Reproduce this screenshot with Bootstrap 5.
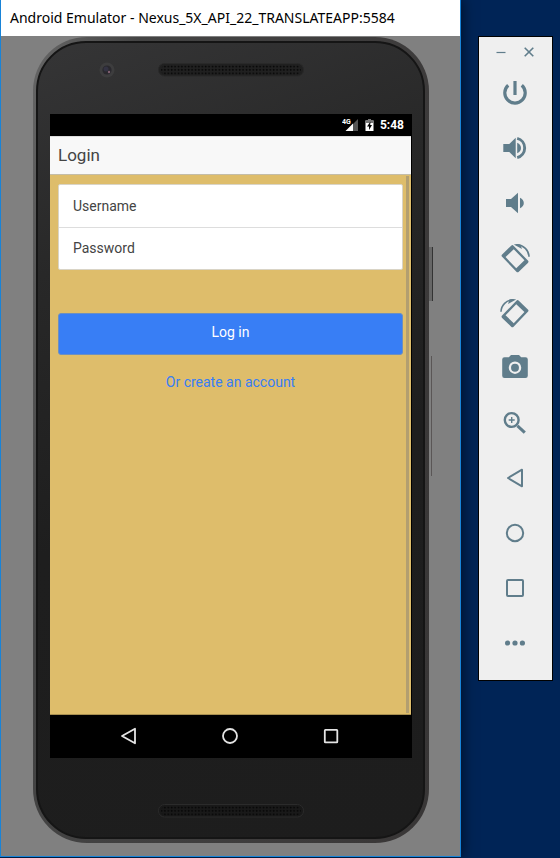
<!DOCTYPE html>
<html lang="en">
<head>
<meta charset="utf-8">
<meta name="viewport" content="width=device-width, initial-scale=1">
<title>Android Emulator</title>
<link href="https://cdn.jsdelivr.net/npm/bootstrap@5.3.0/dist/css/bootstrap.min.css" rel="stylesheet">
<style>
  body { background: #002456; font-family: Roboto, "Liberation Sans", sans-serif; }
  button { background: none; border: 0; padding: 0; color: inherit; }
  svg { display: block; }
  .desktop { padding-right: 7px; padding-bottom: 1px; gap: 17px; }
  .emu-window { background: #808080; border: 1px solid #1883d7; border-top: 0; min-width: 0; box-shadow: 2px 0 12px rgba(0,0,0,.5); }
  .emu-title { background: #fff; color: #000; height: 36px; padding: 0 9px; font: 14px/35px "Noto Sans", sans-serif; white-space: nowrap; overflow: hidden; }
  .device { margin: 1px 31px 13px 32px; padding: 4px 4px 4px 3px; border-radius: 54px; background: linear-gradient(100deg, #666 0, #444 20%, #3c3a3a 80%, #383636 100%); }
  .device-face { border: 2px solid #151515; border-radius: 50px; padding: 0 11px 0 12px; background: linear-gradient(160deg, #353536 0, #282828 25%, #1e1e1e 55%, #1d1d1d 100%); }
  .bezel-top { height: 71px; }
  .bezel-bottom { height: 79px; }
  .grille-top { margin-top: 20px; }
  .grille-bottom { margin-top: 46px; }
  .lens { left: 49px; top: 19px; }
  .side-key { right: -4px; top: 210px; width: 4px; height: 54px; background: #666; border-right: 1px solid #333; }
  .side-rocker { right: -3px; top: 319px; width: 3px; height: 120px; border-right: 1px solid #5a5656; }
  .status-bar { background: #000; color: #fff; height: 22px; padding-right: 8px; font-size: 12px; font-weight: 700; gap: 6px; }
  .app-header { background: #f8f8f8; color: #444; height: 39px; border-top: 1px solid #ddd; border-bottom: 1px solid #c4bda8; padding: 0 8px; margin-right: 1px; }
  .app-header h1 { font-size: 17px; line-height: 37px; font-weight: 400; margin: 0; }
  .app-body { background: #debd6b; padding: 9px 8px 0; border-bottom: 1px solid #a88f50; margin-right: 1px; }
  .scroll-track { right: 2px; top: 1px; bottom: 1px; width: 3px; background: #b39f70; }
  .fields { background: #fff; border: 1px solid #d9d4c6; border-radius: 2px; margin-bottom: 43px; }
  .field { height: 42px; padding: 0 14px; gap: 8px; }
  .field + .field { border-top: 1px solid #ddd; }
  .field label { color: #444; font-size: 14px; }
  .field input { border: 0; outline: 0; background: none; min-width: 0; font-size: 14px; }
  .btn-login { background: #387ef5; color: #fff; border: 1px solid #6c8fc0; border-radius: 3px; height: 42px; font-size: 14px; line-height: 36px; padding: 0 0 4px; }
  .btn-login:hover { background: #2c70e4; color: #fff; }
  .create-link { color: #387ef5; font-size: 14px; line-height: 20px; margin-top: 17px; }
  .nav-keys { background: #000; color: #e4e4e4; height: 43px; gap: 77px; padding: 0 2px 2px 0; }
  .tool-panel { width: 75px; margin-top: 36px; background: #efefef; border: 1px solid #000; color: #607d8b; padding: 0 2px 10px 0; }
  .panel-head { height: 28px; gap: 14px; padding-top: 2px; }
  .tool { height: 55px; }
</style>
<script src="https://cdn.jsdelivr.net/npm/bootstrap@5.3.0/dist/js/bootstrap.bundle.min.js"></script>
</head>
<body>
<div class="desktop d-flex align-items-start min-vh-100">
  <main class="emu-window d-flex flex-column flex-grow-1 align-self-stretch">
    <div class="emu-title">Android Emulator - Nexus_5X_API_22_TRANSLATEAPP:5584</div>
    <div class="device position-relative d-flex flex-column flex-grow-1">
      <span class="side-key position-absolute"></span>
      <span class="side-rocker position-absolute"></span>
      <div class="device-face d-flex flex-column flex-grow-1">
        <div class="bezel-top position-relative d-flex justify-content-center align-items-start">
          <svg class="lens position-absolute" width="16" height="16" viewBox="-8 -8 16 16"><circle r="7.5" fill="#3d3d3e"/><circle r="4.6" fill="#29282d"/><circle cx="-1" cy="-1" r="2.5" fill="#343343"/><circle cx="2" cy="2" r="1.2" fill="#806070"/></svg>
          <svg class="grille-top" width="146" height="14">
            <defs><pattern id="holes" width="3.4" height="3.4" patternUnits="userSpaceOnUse" x="2" y="2"><circle cx="1.5" cy="1.5" r=".9" fill="#050505"/></pattern></defs>
            <rect x=".5" y=".5" width="145" height="12.5" rx="6" fill="#202020" stroke="#292929"/>
            <rect x="3" y="2" width="140" height="10" rx="5" fill="url(#holes)"/>
          </svg>
        </div>
        <section class="d-flex flex-column flex-grow-1 bg-black">
          <div class="status-bar d-flex justify-content-end align-items-center">
            <svg width="17" height="14" viewBox="0 0 17 14"><path d="M16 1v12H10.500V6.500z" fill="#555"/><path d="M3.500 13L11 5.500V13z" fill="#fff"/><text x="0" y="6" font-size="7" font-weight="700" fill="#fff">4G</text></svg>
            <svg width="9" height="14" viewBox="0 0 9 14"><path d="M3 1h3v1.500h2.500V13h-8V2.500H3z" fill="#fff"/><path d="M3 1h3v1.500h2.500V5h-8V2.500H3z" fill="#777"/><path d="M5.500 3.500L2 8.500h2V12l3-5H5.200z" fill="#000"/></svg>
            <span>5:48</span>
          </div>
          <header class="app-header"><h1>Login</h1></header>
          <form class="app-body position-relative flex-grow-1">
            <div class="fields">
              <div class="field d-flex align-items-center"><label for="username">Username</label><input class="flex-grow-1" id="username" type="text"></div>
              <div class="field d-flex align-items-center"><label for="password">Password</label><input class="flex-grow-1" id="password" type="password"></div>
            </div>
            <button type="button" class="btn btn-login d-block w-100">Log in</button>
            <div class="text-center"><a class="create-link d-inline-block text-decoration-none" href="#">Or create an account</a></div>
            <span class="scroll-track position-absolute"></span>
          </form>
          <nav class="nav-keys d-flex justify-content-center align-items-center" aria-label="Device navigation">
            <button type="button" aria-label="Back"><svg width="24" height="24" viewBox="-12 -12 24 24" fill="none" stroke="currentColor" stroke-width="1.800" stroke-linejoin="round"><path d="M-7 0L6-7.300V7.300z"/></svg></button>
            <button type="button" aria-label="Home"><svg width="24" height="24" viewBox="-12 -12 24 24" fill="none" stroke="currentColor" stroke-width="1.800"><circle r="7"/></svg></button>
            <button type="button" aria-label="Overview"><svg width="24" height="24" viewBox="-12 -12 24 24" fill="none" stroke="currentColor" stroke-width="1.800"><rect x="-6.200" y="-6.200" width="12.500" height="12.500" rx=".6"/></svg></button>
          </nav>
        </section>
        <div class="bezel-bottom d-flex justify-content-center align-items-start">
          <svg class="grille-bottom" width="146" height="14"><rect x=".5" y=".5" width="145" height="12.500" rx="6" fill="#191919" stroke="#2b2b2b"/><rect x="3" y="2" width="140" height="10" rx="5" fill="url(#holes)"/></svg>
        </div>
      </div>
    </div>
  </main>
  <aside class="tool-panel d-flex flex-column flex-shrink-0" aria-label="Emulator controls">
    <div class="panel-head d-flex justify-content-center align-items-center">
      <button type="button" aria-label="Minimize"><svg width="14" height="14" viewBox="-7 -7 14 14" stroke="currentColor" stroke-width="1.200"><path d="M-4.500 .5h9"/></svg></button>
      <button type="button" aria-label="Close"><svg width="14" height="14" viewBox="-7 -7 14 14" stroke="currentColor" stroke-width="1.600"><path d="M-4.300-4.300l8.600 8.600M4.300-4.300l-8.600 8.600"/></svg></button>
    </div>
    <button type="button" class="tool d-flex justify-content-center align-items-center" aria-label="Power"><svg width="30" height="30" viewBox="-15 -15 30 30" fill="none" stroke="currentColor" stroke-width="3.200"><path d="M0-12V2M-6.800-7.700A10.200 10.200 0 1 0 6.800-7.700"/></svg></button>
    <button type="button" class="tool d-flex justify-content-center align-items-center" aria-label="Volume up"><svg width="30" height="30" viewBox="-15 -15 30 30" fill="currentColor"><path d="M-11.700-4h6L.7-10.200V10.200L-5.700 4h-6zM2.200-5.300Q6-3.500 6 0T2.200 5.300z"/><path d="M2.200-9.600A9.900 9.900 0 0 1 2.200 9.600" fill="none" stroke="currentColor" stroke-width="2.900"/></svg></button>
    <button type="button" class="tool d-flex justify-content-center align-items-center" aria-label="Volume down"><svg width="30" height="30" viewBox="-15 -15 30 30" fill="currentColor"><path d="M-9-4h5L3-10.200V10.200L-4 4h-5zM5-5.300Q8.800-3.500 8.800 0T5 5.300z"/></svg></button>
    <button type="button" class="tool d-flex justify-content-center align-items-center" aria-label="Rotate left"><svg width="30" height="30" viewBox="-15 -15 30 30"><g id="rotate"><path transform="translate(0 .7) rotate(-44)" fill="currentColor" fill-rule="evenodd" d="M-6.300-12H6.300Q8-12 8-10.300V10.300Q8 12 6.300 12H-6.300Q-8 12-8 10.300V-10.300Q-8-12-6.300-12zM-5.700-7.700V7.700H5.700V-7.700z"/><path d="M2-13.200C8.500-13 13.800-8 14-1.200" fill="none" stroke="currentColor" stroke-width="1.600"/><path d="M-1.200-13.600Q2-14.600 5.500-13.200L7-8.900z" fill="currentColor"/></g></svg></button>
    <button type="button" class="tool d-flex justify-content-center align-items-center" aria-label="Rotate right"><svg width="30" height="30" viewBox="-15 -15 30 30"><use href="#rotate" transform="scale(-1 1)"/></svg></button>
    <button type="button" class="tool d-flex justify-content-center align-items-center" aria-label="Take screenshot"><svg width="30" height="30" viewBox="-15 -15 30 30"><path fill="currentColor" d="M-10.500-10.800H-6.200L-4-13H4L6.200-10.800H10.500Q12.800-10.800 12.800-8.500V7.800Q12.800 10 10.500 10H-10.500Q-12.800 10-12.800 7.800V-8.500Q-12.800-10.800-10.500-10.800z"/><circle cy="-.3" r="5.100" fill="none" stroke="#efefef" stroke-width="2.300"/></svg></button>
    <button type="button" class="tool d-flex justify-content-center align-items-center" aria-label="Zoom"><svg width="30" height="30" viewBox="-15 -15 30 30" fill="none" stroke="currentColor"><circle cx="-3.300" cy="-3" r="6.900" stroke-width="2.400"/><path d="M2.500 2.800L9.800 9.700" stroke-width="3"/><path d="M-3.300-6v6M-6.300-3h6" stroke-width="1.400"/></svg></button>
    <button type="button" class="tool d-flex justify-content-center align-items-center" aria-label="Back"><svg width="30" height="30" viewBox="-15 -15 30 30" fill="none" stroke="currentColor" stroke-width="2" stroke-linejoin="round"><path d="M-7 0L7-8.300V8.300z"/></svg></button>
    <button type="button" class="tool d-flex justify-content-center align-items-center" aria-label="Home"><svg width="30" height="30" viewBox="-15 -15 30 30" fill="none" stroke="currentColor" stroke-width="2"><circle r="8.200"/></svg></button>
    <button type="button" class="tool d-flex justify-content-center align-items-center" aria-label="Overview"><svg width="30" height="30" viewBox="-15 -15 30 30" fill="none" stroke="currentColor" stroke-width="2"><rect x="-8" y="-8" width="16" height="16" rx="1"/></svg></button>
    <button type="button" class="tool d-flex justify-content-center align-items-center" aria-label="More"><svg width="30" height="30" viewBox="-15 -15 30 30" fill="currentColor"><circle cx="-7.400" r="2.600"/><circle r="2.600"/><circle cx="7.400" r="2.600"/></svg></button>
  </aside>
</div>
</body>
</html>
